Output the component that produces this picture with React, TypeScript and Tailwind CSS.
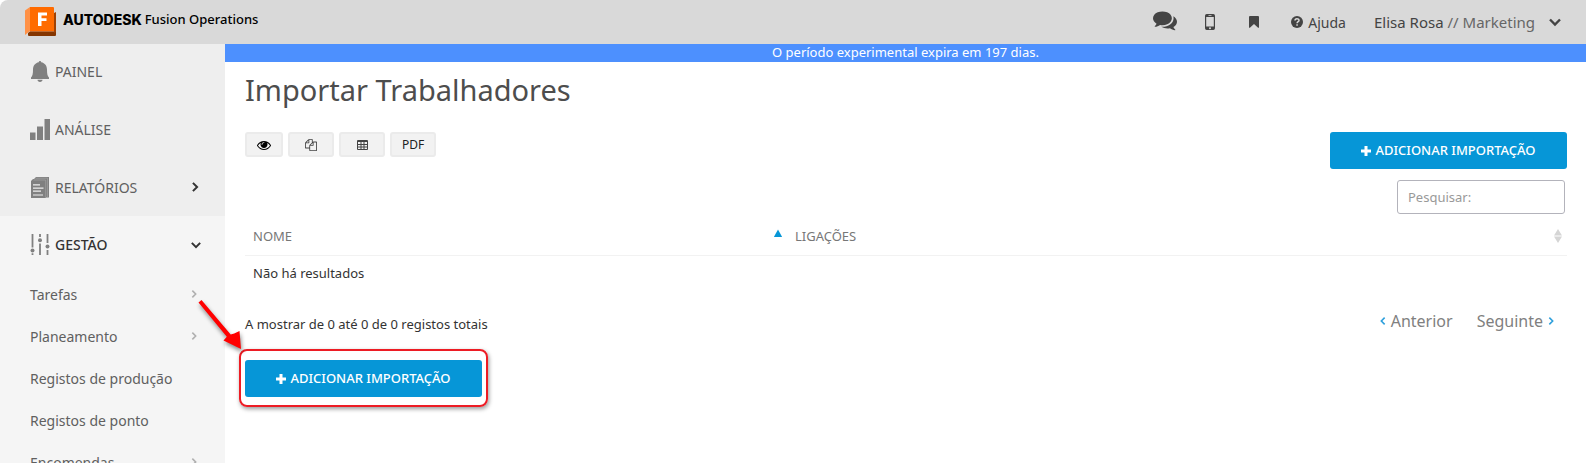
import React from "react";

type IconProps = { className?: string };

const CommentsIcon = ({ className }: IconProps) => (
  <svg viewBox="0 0 1792 1792" fill="currentColor" className={className} aria-hidden="true">
    <path d="M1408 768q0 139-94 257t-256.5 186.5-353.5 68.5q-86 0-176-16-124 88-278 128-36 9-86 16h-3q-11 0-20.5-8t-11.5-21q-1-3-1-6.5t.5-6.5 2-6l2.500-5 3.500-5.500 4-5 4.500-5 4-4.500q5-6 23-25t26-29.500 22.500-29 25-38.500 20.500-44q-124-72-195-177t-71-224q0-139 94-257t256.500-186.500 353.500-68.500 353.500 68.500 256.500 186.500 94 257zm384 256q0 120-71 224.500t-195 176.500q10 24 20.500 44t25 38.500 22.500 29 26 29.500 23 25q1 1 4 4.500t4.500 5 4 5 3.500 5.500l2.500 5 2 6 .5 6.500-1 6.500q-3 14-13 22t-22 7q-50-7-86-16-154-40-278-128-90 16-176 16-271 0-472-132 58 4 88 4 161 0 309-45t264-129q125-92 192-212t67-254q0-77-23-152 129 71 204 178t75 230z" />
  </svg>
);

const MobileIcon = ({ className }: IconProps) => (
  <svg viewBox="0 0 10 16" className={className} aria-hidden="true">
    <path fill="currentColor" fillRule="evenodd" d="M1.700 0h6.600A1.700 1.700 0 0 1 10 1.700v12.600A1.700 1.700 0 0 1 8.300 16H1.700A1.700 1.700 0 0 1 0 14.300V1.700A1.700 1.700 0 0 1 1.700 0zM1.200 3v9.500h7.600V3zM3.500 1.200v.7h3v-.7zM5 13.300a1 1 0 1 0 0 2 1 1 0 0 0 0-2z" />
  </svg>
);

const BookmarkIcon = ({ className }: IconProps) => (
  <svg viewBox="0 0 10 12" fill="currentColor" className={className} aria-hidden="true">
    <path d="M1 0h8a1 1 0 0 1 1 1v10.200q0 .8-.9.600L5 8 .9 11.800Q0 12 0 11.200V1a1 1 0 0 1 1-1z" />
  </svg>
);

const HelpIcon = ({ className }: IconProps) => (
  <svg viewBox="0 0 12 12" className={className} aria-hidden="true">
    <circle cx="6" cy="6" r="6" fill="currentColor" />
    <path d="M4 4.600C4 2.200 8 2.200 8 4.500 8 5.800 6.100 5.700 6.100 7.200" fill="none" stroke="#d9d9d9" strokeWidth="1.500" />
    <path d="M5.300 8.200h1.500v1.500H5.300z" fill="#d9d9d9" />
  </svg>
);

const Chevron = ({ className }: IconProps) => (
  <svg viewBox="0 0 12 12" fill="none" stroke="currentColor" strokeWidth="2.400" className={className} aria-hidden="true">
    <path d="M1 3.500 6 8.500 11 3.500" />
  </svg>
);

const BellIcon = ({ className }: IconProps) => (
  <svg viewBox="0 0 18 21" fill="currentColor" className={className} aria-hidden="true">
    <path d="M9 0c.8 0 1.200.6 1.200 1.300C14 2 16 5 16 8.500c0 4 .4 6.500 2 8v1.500H0v-1.500c1.600-1.500 2-4 2-8C2 5 4 2 7.800 1.300 7.800.6 8.200 0 9 0zM6.500 18.800h5c0 1.300-1 2.200-2.500 2.200s-2.500-.9-2.500-2.200z" />
  </svg>
);

const BarsIcon = ({ className }: IconProps) => (
  <svg viewBox="0 0 20 21" fill="currentColor" className={className} aria-hidden="true">
    <path d="M0 13.500h5.500V21H0zM7 7.500h6V21H7zM14.500 0H20v21h-5.500z" />
  </svg>
);

const ReportsIcon = ({ className }: IconProps) => (
  <svg viewBox="0 0 18 21" className={className} aria-hidden="true">
    <path d="M5 0h13v20.500h-3V21H0V4l2-2h1z" fill="#808080" />
    <path d="M2.500 3h12.200v18M4.500 1.200h12v19.500" fill="none" stroke="#b0b0b0" strokeWidth=".5" />
    <path d="M2 7.800h7M2 11.200h10.500M2 14.200h8M2 18h10" stroke="#eee" strokeWidth="1.200" />
  </svg>
);

const SlidersIcon = ({ className }: IconProps) => (
  <svg viewBox="0 0 19 21" fill="none" stroke="currentColor" strokeWidth="1.800" className={className} aria-hidden="true">
    <path d="M2 0v13.500M2 19.200V21M9.500 0v3M9.500 9.500V21M17 0v9M17 16v5" />
    <g fill="currentColor" stroke="none">
      <circle cx="2" cy="16.500" r="2" />
      <circle cx="9.500" cy="6.200" r="2" />
      <circle cx="17" cy="12.500" r="2" />
    </g>
  </svg>
);

const EyeIcon = ({ className }: IconProps) => (
  <svg viewBox="0 0 1792 1792" fill="currentColor" className={className} aria-hidden="true">
    <path d="M1664 960q-152-236-381-353 61 104 61 225 0 185-131.500 316.500t-316.500 131.500-316.500-131.500-131.500-316.500q0-121 61-225-229 117-381 353 133 205 333.500 326.500t434.500 121.500 434.500-121.500 333.500-326.500zm-720-384q0-20-14-34t-34-14q-125 0-214.500 89.500t-89.500 214.500q0 20 14 34t34 14 34-14 14-34q0-86 61-147t147-61q20 0 34-14t14-34zm848 384q0 34-20 69-140 230-376.500 368.500t-499.500 138.500-499.500-139-376.500-368q-20-35-20-69t20-69q140-229 376.500-368t499.500-139 499.500 139 376.500 368q20 35 20 69z" />
  </svg>
);

const CopyIcon = ({ className }: IconProps) => (
  <svg viewBox="0 0 1792 1792" fill="currentColor" className={className} aria-hidden="true">
    <path d="M1696 384q40 0 68 28t28 68v1216q0 40-28 68t-68 28h-960q-40 0-68-28t-28-68v-288h-544q-40 0-68-28t-28-68v-672q0-40 20-88t48-76l408-408q28-28 76-48t88-20h416q40 0 68 28t28 68v328q68-40 128-40h416zm-544 213l-299 299h299v-299zm-640-384l-299 299h299v-299zm196 647l316-316v-416h-384v416q0 40-28 68t-68 28h-416v640h512v-256q0-40 20-88t48-76zm956 804v-1152h-384v416q0 40-28 68t-68 28h-416v640h896z" />
  </svg>
);

const TableIcon = ({ className }: IconProps) => (
  <svg viewBox="0 0 11 10" className={className} aria-hidden="true">
    <path d="M.5.500h10v9H.5zM0 1.500h11M0 4.500h11M0 7h11M4 1v9M7 1v9" fill="none" stroke="currentColor" />
  </svg>
);

const PlusIcon = ({ className }: IconProps) => (
  <svg viewBox="0 0 10 10" fill="currentColor" className={className} aria-hidden="true">
    <path d="M3.500 0h3v3.500H10v3H6.500V10h-3V6.500H0v-3h3.500z" />
  </svg>
);

const FusionLogo = () => (
  <svg viewBox="0 0 32 30" className="h-[30px] w-8 shrink-0" aria-hidden="true">
    <path d="M5 0 0 3.500V28l5-4z" fill="#ff9146" />
    <path d="M5 0h23a1 1 0 0 1 1 1v23.500H5z" fill="#ff6b00" />
    <path d="M5 24.500h24l2-1.500v5a1 1 0 0 1-1 1H4a1 1 0 0 1-1-1v-2z" fill="#843500" />
    <path d="M29 6l2-1v20l-2 1z" fill="#9f4205" />
    <path d="M13 5.500h9v3h-5.500v2.700h5v2.900h-5v5H13z" fill="#fff" />
  </svg>
);

const AddButton = () => (
  <button
    type="button"
    className="flex h-[37px] w-[237px] items-center justify-center gap-1 rounded-[3px] bg-[#0696d7] text-[13px] font-medium text-white"
  >
    <PlusIcon className="size-[10px]" />
    ADICIONAR IMPORTAÇÃO
  </button>
);

const sections = [
  { label: "PAINEL", Icon: BellIcon, more: false },
  { label: "ANÁLISE", Icon: BarsIcon, more: false },
  { label: "RELATÓRIOS", Icon: ReportsIcon, more: true },
];

const subItems = [
  { label: "Tarefas", more: true },
  { label: "Planeamento", more: true },
  { label: "Registos de produção", more: false },
  { label: "Registos de ponto", more: false },
  { label: "Encomendas", more: true },
];

const toolButton =
  "flex h-[25px] items-center justify-center rounded-[3px] border-2 border-[#ebebeb] bg-[#f2f2f2] text-[12px] text-[#222]";

export default function App() {
  return (
    <div className="flex h-screen flex-col overflow-hidden bg-white font-['Noto_Sans',sans-serif] text-[13px] text-[#333]">
      <header className="flex h-11 shrink-0 items-center justify-between rounded-tl-lg bg-[#d9d9d9] pr-[25px] pl-[25px]">
        <a href="#" className="flex items-center gap-[6px] text-black">
          <FusionLogo />
          <span className="flex items-center gap-[3px] pb-[5px]">
            <span className="font-[Inter,sans-serif] text-[14px] font-extrabold">AUTODESK</span>
            <span className="text-[13px] font-medium">Fusion Operations</span>
          </span>
        </a>
        <nav className="flex items-center text-[#444]" aria-label="Conta">
          <a href="#" aria-label="Mensagens">
            <CommentsIcon className="mb-1 size-6" />
          </a>
          <a href="#" aria-label="Telemóvel" className="ml-7">
            <MobileIcon className="h-4 w-[10px]" />
          </a>
          <a href="#" aria-label="Marcadores" className="ml-[34px]">
            <BookmarkIcon className="h-3 w-[10px]" />
          </a>
          <a href="#" className="ml-8 flex items-center gap-[5px] text-[14px]">
            <HelpIcon className="size-3" />
            Ajuda
          </a>
          <button type="button" className="ml-7 flex items-center gap-[14px] text-[15px]">
            <span>
              Elisa Rosa <span className="text-[#666]">// Marketing</span>
            </span>
            <Chevron className="size-3" />
          </button>
        </nav>
      </header>

      <div className="flex min-h-0 flex-1">
        <aside className="w-[225px] shrink-0 overflow-hidden bg-[#f5f5f5] text-[14px] text-[#606060]">
          <nav aria-label="Principal">
            <ul className="bg-[#eee]">
              {sections.map(({ label, Icon, more }) => (
                <li key={label} className="first:-mt-[2px]">
                  <a href="#" className="flex h-[58px] items-center gap-[5px] pr-[25px] pl-[30px]">
                    <Icon className="h-[21px] w-5 text-[#808080]" />
                    <span className="flex-1">{label}</span>
                    {more && <Chevron className="size-[10px] -rotate-90 text-[#333]" />}
                  </a>
                </li>
              ))}
            </ul>
            <a href="#" className="flex h-[57px] items-center gap-[5px] pr-6 pl-[30px] font-medium text-[#333]">
              <SlidersIcon className="h-[21px] w-5 text-[#808080]" />
              <span className="flex-1">GESTÃO</span>
              <Chevron className="size-[10px]" />
            </a>
            <ul>
              {subItems.map(({ label, more }) => (
                <li key={label}>
                  <a href="#" className="flex h-[42px] items-center justify-between pr-[27px] pl-[30px]">
                    {label}
                    {more && <Chevron className="size-2 -rotate-90 text-[#b0b0b0]" />}
                  </a>
                </li>
              ))}
            </ul>
          </nav>
        </aside>

        <main className="min-w-0 flex-1">
          <p className="h-[18px] bg-[#4d90fe] text-center leading-4 text-white">
            O período experimental expira em 197 dias.
          </p>
          <div className="pr-[19px] pl-5">
            <h1 className="pt-[10px] text-[29px] leading-9 text-[#4d4d4d]">Importar Trabalhadores</h1>
            <div className="mt-6 flex items-start justify-between">
              <div className="flex gap-[5px]">
                <button type="button" aria-label="Colunas visíveis" className={`${toolButton} w-[38px]`}>
                  <EyeIcon className="size-[14px] text-black" />
                </button>
                <button type="button" aria-label="Copiar" className={`${toolButton} w-[46px]`}>
                  <CopyIcon className="size-3 text-[#444]" />
                </button>
                <button type="button" aria-label="Folha de cálculo" className={`${toolButton} w-[46px]`}>
                  <TableIcon className="h-[10px] w-[11px] text-[#444]" />
                </button>
                <button type="button" className={`${toolButton} w-[46px]`}>
                  PDF
                </button>
              </div>
              <AddButton />
            </div>
            <div className="mt-[11px] flex justify-end pr-[2px]">
              <input
                type="search"
                aria-label="Pesquisar"
                placeholder="Pesquisar:"
                className="h-[34px] w-[168px] rounded-[3px] border border-[#b3b3bb] px-[10px] placeholder:text-[#999]"
              />
            </div>
            <table className="w-full table-fixed text-left">
              <thead>
                <tr className="h-[41px] border-b border-[#f2f2f2] text-[#777]">
                  <th className="w-[41%] pr-[5px] pl-2 font-normal">
                    <span className="flex items-center justify-between pt-1">
                      NOME
                      <svg viewBox="0 0 8 14" className="h-[14px] w-2" aria-hidden="true">
                        <path d="M4 .500 8.200 8H-.2z" fill="#0696d7" />
                      </svg>
                    </span>
                  </th>
                  <th className="pr-[5px] pl-2 font-normal">
                    <span className="flex items-center justify-between pt-1">
                      LIGAÇÕES
                      <svg viewBox="0 0 8 14" className="h-[14px] w-2" aria-hidden="true">
                        <path d="M4 0 8 6.500H0zM4 14 8 7.500H0z" fill="#d5d5d5" />
                      </svg>
                    </span>
                  </th>
                </tr>
              </thead>
              <tbody>
                <tr className="h-9">
                  <td colSpan={2} className="px-2">
                    Não há resultados
                  </td>
                </tr>
              </tbody>
            </table>
            <div className="mt-[18px] flex h-[31px] items-start justify-between pr-3">
              <p className="pt-[5px] leading-5">A mostrar de 0 até 0 de 0 registos totais</p>
              <nav className="flex gap-6 text-[16px] leading-6 text-[#808080]" aria-label="Paginação">
                <a href="#" className="flex items-center gap-1">
                  <Chevron className="size-2 rotate-90 text-[#2fa0dc]" />
                  Anterior
                </a>
                <a href="#" className="flex items-center gap-1">
                  Seguinte
                  <Chevron className="size-2 -rotate-90 text-[#2fa0dc]" />
                </a>
              </nav>
            </div>
            <div className="relative mt-5 w-fit">
              <AddButton />
              <div className="pointer-events-none absolute -inset-x-[6px] -top-[11px] -bottom-[10px] rounded-lg border-2 border-[#ed1c24] shadow-[1px_2px_4px_rgba(0,0,0,0.4)]" />
              <svg viewBox="0 0 52 62" className="pointer-events-none absolute -top-[64px] -left-[50px] h-[62px] w-[52px] drop-shadow-[1px_3px_2px_rgba(0,0,0,0.45)]" aria-hidden="true">
                <path d="M6.500 4 3.500 6.500l28.300 34.200-3.300 3.800L46 53l-1.500-18-5.300 2.500-3.500 1z" fill="#f00" />
              </svg>
            </div>
          </div>
        </main>
      </div>
    </div>
  );
}
